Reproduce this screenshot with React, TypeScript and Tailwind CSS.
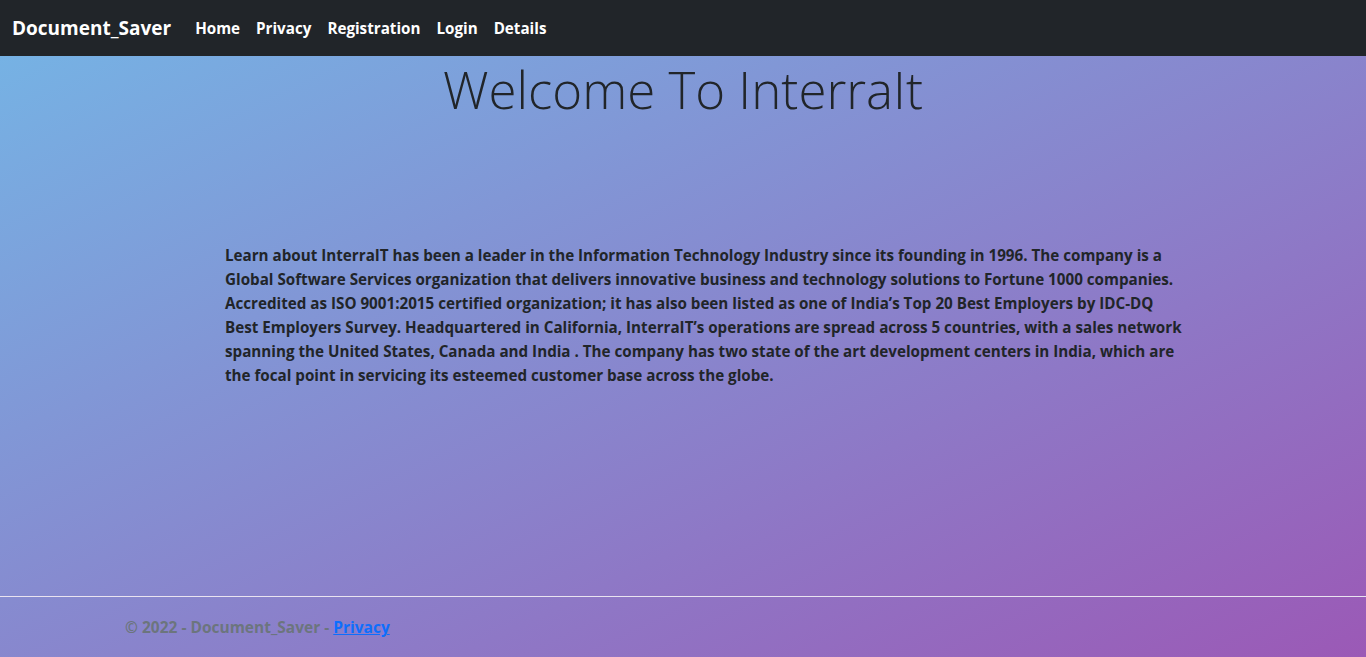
import React from "react";

const links = ["Home", "Privacy", "Registration", "Login", "Details"];

const lines = [
  "Learn about InterraIT has been a leader in the Information Technology Industry since its founding in 1996. The company is a",
  "Global Software Services organization that delivers innovative business and technology solutions to Fortune 1000 companies.",
  "Accredited as ISO 9001:2015 certified organization; it has also been listed as one of India’s Top 20 Best Employers by IDC-DQ",
  "Best Employers Survey. Headquartered in California, InterraIT’s operations are spread across 5 countries, with a sales network",
  "spanning the United States, Canada and India . The company has two state of the art development centers in India, which are",
  "the focal point in servicing its esteemed customer base across the globe.",
];

export default function App() {
  return (
    <div className="min-h-[657px] flex flex-col bg-[linear-gradient(to_bottom_right,#74b6e6,#9b59b6)] font-['Open_Sans',sans-serif] text-[#212529]">
      {/* Navbar */}
      <nav className="h-14 bg-[#212529] flex items-center px-3">
        <span className="text-white text-[19px] font-bold mr-6">Document_Saver</span>
        <ul className="flex gap-4 text-white font-bold text-[15.2px]">
          {links.map((l) => (
            <li key={l}>{l}</li>
          ))}
        </ul>
      </nav>

      {/* Main */}
      <main className="flex-1 flex flex-col">
        <h1 className="text-center text-[51px] font-light leading-[1.2] mt-[3px]">
          Welcome To InterraIt
        </h1>
        <p className="mt-[123px] ml-[225px] text-[15.2px] font-bold leading-6">
          {lines.map((l) => (
            <span key={l} className="block whitespace-nowrap">
              {l}
            </span>
          ))}
        </p>
      </main>

      {/* Footer */}
      <footer className="border-t border-[#e9e3f0] h-[61px] flex items-center pt-[2px]">
        <div className="pl-[125px] text-[#6c757d] font-bold text-[15.5px]">
          © 2022 - Document_Saver -{" "}
          <a href="#" className="text-[#0d6efd] underline">
            Privacy
          </a>
        </div>
      </footer>
    </div>
  );
}
